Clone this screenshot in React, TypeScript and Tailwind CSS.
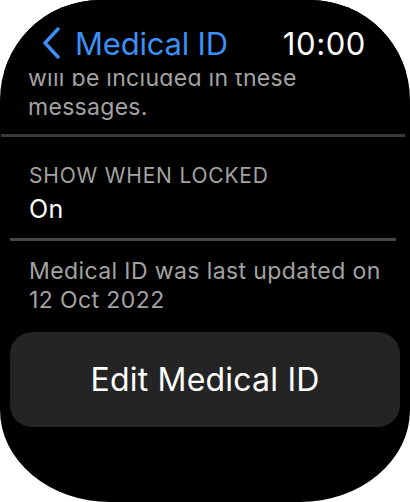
import React from "react";

function Chevron() {
  return (
    <svg width="20" height="32" viewBox="0 0 20 32" fill="none" className="shrink-0 mt-[-2px]">
      <path d="M16 2 L3 16 L16 30" stroke="#3d8ef5" strokeWidth="3.4" strokeLinecap="round" strokeLinejoin="round" />
    </svg>
  );
}

export default function App() {
  return (
    <div className="w-[410px] h-[502px] bg-white" style={{ fontFamily: "Inter, 'Noto Sans', sans-serif" }}>
      <div className="w-full h-full bg-black overflow-hidden flex flex-col rounded-tl-[100px] rounded-tr-[100px] rounded-bl-[110px_92px] rounded-br-[110px_92px]">
        <header className="flex items-start justify-between pt-[28px] pl-[42px] pr-[44px] h-[73px] shrink-0 relative z-10 bg-black">
          <div className="flex items-center gap-[13px]">
            <Chevron />
            <span className="text-[31px] leading-none text-[#3d8ef5] tracking-[-0.2px]">Medical ID</span>
          </div>
          <span className="text-[31px] leading-none text-white tracking-[0.6px]">10:00</span>
        </header>

        <div className="flex flex-col -mt-[9px]">
          <p className="pl-[28px] text-[23px] leading-[29px] text-[#a3a3a3] tracking-[0.3px]">
            will be included in these
            <br />
            messages.
          </p>
          <div className="mt-[12px] ml-[1px] mr-[5px] h-[3px] bg-[#3a3a3a]" />

          <div className="pl-[29px] pt-[28px] pb-[15px]">
            <p className="text-[21px] leading-[22px] text-[#a3a3a3] tracking-[0.8px]">SHOW WHEN LOCKED</p>
            <p className="mt-[8px] text-[25px] leading-[28px] text-white tracking-[0.3px]">On</p>
          </div>
          <div className="ml-[10px] mr-[14px] h-[3px] bg-[#474747]" />

          <p className="pl-[29px] pt-[16px] text-[23px] leading-[29px] text-[#a3a3a3] tracking-[0.4px]">
            Medical ID was last updated on
            <br />
            12 Oct 2022
          </p>

          <button className="mt-[17px] mx-[10px] h-[95px] shrink-0 rounded-[22px] bg-[#242424] text-white text-[32px] tracking-[0.2px] flex items-center justify-center">
            Edit Medical ID
          </button>
        </div>
      </div>
    </div>
  );
}
